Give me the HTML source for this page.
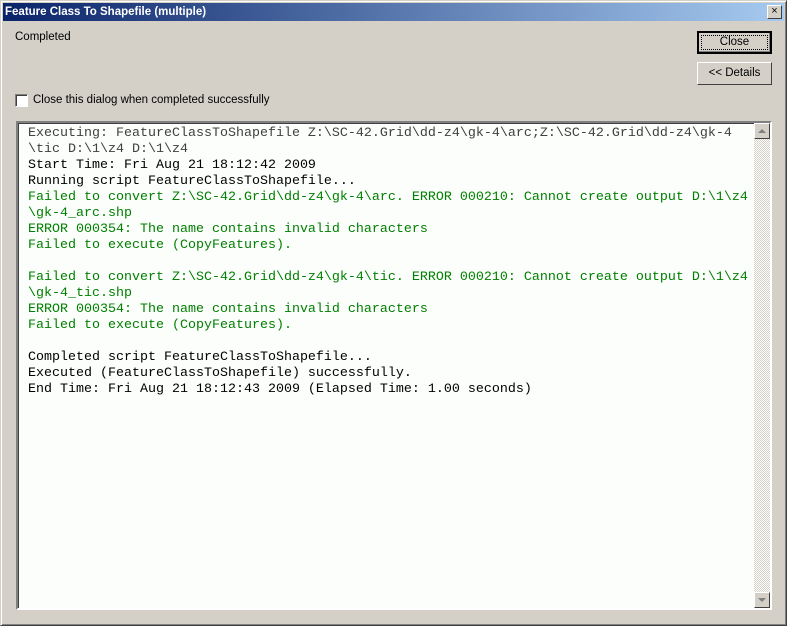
<!DOCTYPE html>
<html><head><style>
*{margin:0;padding:0;box-sizing:border-box}
body{width:787px;height:626px;background:#d4d0c8;position:relative;overflow:hidden;font-family:"Liberation Sans",Tahoma,sans-serif;font-size:11px;color:#000}
.win{position:absolute;left:0;top:0;width:787px;height:626px;border:1px solid;border-color:#d4d0c8 #404040 #404040 #d4d0c8;box-shadow:inset 1px 1px 0 #fff, inset -1px -1px 0 #808080}
.title{position:absolute;left:3px;top:3px;width:781px;height:18px;background:linear-gradient(to right,#0a246a,#a6caf0);color:#fff;font-weight:bold;font-size:11.5px;line-height:18px;padding-left:2px}
.xbtn{position:absolute;left:764px;top:2px;width:15px;height:14px;background:#d4d0c8;border:1px solid;border-color:#fff #404040 #404040 #fff;font-size:11px;line-height:11px;text-align:center;color:#000;font-weight:normal}
.btn{position:absolute;background:#d4d0c8;border:1px solid;border-color:#fff #404040 #404040 #fff;text-align:center;font-size:11.5px}
.lbl{position:absolute;font-size:11.5px}
.box{position:absolute;left:16px;top:121px;width:756px;height:489px;background:#fcfefc;border:2px solid;border-color:#808080 #fff #fff #808080;box-shadow:inset 1px 1px 0 #404040}
.txt{position:absolute;left:10px;top:3px;font-family:"Liberation Mono","Courier New",monospace;font-size:13.33px;line-height:16px;white-space:pre;color:#000}
.g{color:#008000}.d{color:#404040}
.sb{position:absolute;right:0;top:0;width:16px;height:485px;background:repeating-conic-gradient(#d4d0c8 0 25%,#fff 0 50%) 0 0/2px 2px}
.arr{position:absolute;left:0;width:16px;height:16px;background:#d4d0c8;border:1px solid;border-color:#fff #404040 #404040 #fff}
</style></head><body>
<div class="win"></div>
<div class="title">Feature Class To Shapefile (multiple)<div class="xbtn">×</div></div>
<div class="lbl" style="left:15px;top:31px">Completed</div>
<div class="btn" style="left:697px;top:31px;width:75px;height:23px;border:2px solid #000;box-shadow:inset -1px -1px 0 #808080"><div style="margin:2px;border:1px dotted #000;height:15px;line-height:13px">Close</div></div>
<div class="btn" style="left:697px;top:62px;width:75px;height:23px;line-height:21px">&lt;&lt; Details</div>
<div style="position:absolute;left:15px;top:94px;width:13px;height:13px;background:#fff;border:1px solid;border-color:#808080 #fff #fff #808080;box-shadow:inset 1px 1px 0 #404040"></div>
<div class="lbl" style="left:33px;top:94px">Close this dialog when completed successfully</div>
<div class="box">
<div class="txt"><span class="d">Executing: FeatureClassToShapefile Z:\SC-42.Grid\dd-z4\gk-4\arc;Z:\SC-42.Grid\dd-z4\gk-4
\tic D:\1\z4 D:\1\z4</span>
Start Time: Fri Aug 21 18:12:42 2009
Running script FeatureClassToShapefile...
<span class="g">Failed to convert Z:\SC-42.Grid\dd-z4\gk-4\arc. ERROR 000210: Cannot create output D:\1\z4
\gk-4_arc.shp
ERROR 000354: The name contains invalid characters
Failed to execute (CopyFeatures).

Failed to convert Z:\SC-42.Grid\dd-z4\gk-4\tic. ERROR 000210: Cannot create output D:\1\z4
\gk-4_tic.shp
ERROR 000354: The name contains invalid characters
Failed to execute (CopyFeatures).</span>

Completed script FeatureClassToShapefile...
Executed (FeatureClassToShapefile) successfully.
End Time: Fri Aug 21 18:12:43 2009 (Elapsed Time: 1.00 seconds)</div>
<div class="sb">
<div class="arr" style="top:0"><svg width="14" height="14" style="position:absolute;left:0;top:0"><path d="M3 9h8L7 5z" fill="#808080"/></svg></div>
<div class="arr" style="bottom:0"><svg width="14" height="14" style="position:absolute;left:0;top:0"><path d="M3 5h8L7 9z" fill="#808080"/></svg></div>
</div>
</div>
</body></html>
